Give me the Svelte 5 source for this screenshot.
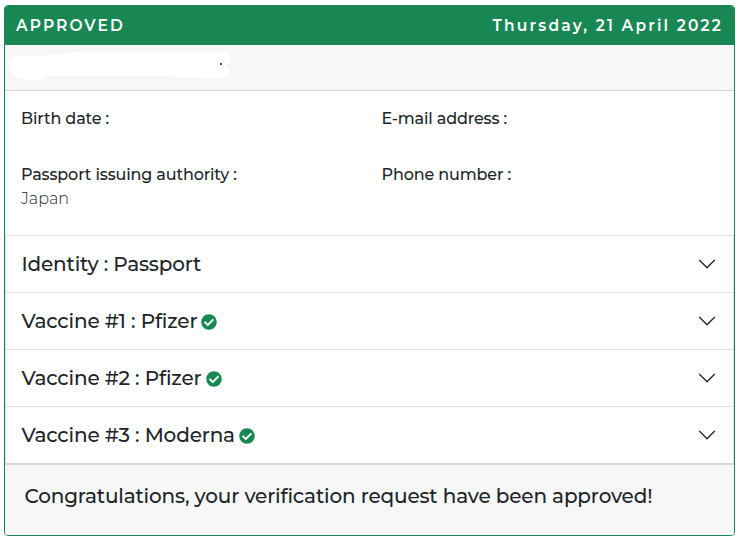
<script>
	let status = 'APPROVED';
	let date = 'Thursday, 21 April 2022';

	let details = [
		{ label: 'Birth date :', value: '' },
		{ label: 'E-mail address :', value: '' },
		{ label: 'Passport issuing authority :', value: 'Japan' },
		{ label: 'Phone number :', value: '' }
	];

	let sections = [
		{ title: 'Identity : Passport', verified: false },
		{ title: 'Vaccine #1 : Pfizer', verified: true },
		{ title: 'Vaccine #2 : Pfizer', verified: true },
		{ title: 'Vaccine #3 : Moderna', verified: true }
	];
</script>

<main class="card">
	<header>
		<span class="status">{status}</span>
		<span class="date">{date}</span>
	</header>

	<div class="name">
		<!-- the holder's name is painted over -->
		<svg width="224" height="34" viewBox="0 0 224 34">
			<path d="M8 5 L48 4 Q58 1 76 0.5 L214 0.5 Q222 2 222 7 Q222 12 216 14 Q220 16 220 21 Q219 27 211 27.5 L174 26 L155 25 L36 25 Q33 29 27 29.5 L10 28 Q3 27 3.5 21 Q0 18 0.5 12 Q2 5 8 5 Z" fill="#fff" />
			<rect x="211" y="12" width="2" height="2" fill="#444" />
		</svg>
	</div>

	<div class="details">
		{#each details as item}
			<div class="item">
				<div class="label">{item.label}</div>
				<div class="value">{item.value}</div>
			</div>
		{/each}
	</div>

	<div class="accordion">
		{#each sections as section}
			<button class="section">
				<span class="title">{section.title}</span>
				{#if section.verified}
					<svg class="check" viewBox="0 0 512 512">
						<path d="M504 256c0 136.967-111.033 248-248 248S8 392.967 8 256 119.033 8 256 8s248 111.033 248 248zM227.314 387.314l184-184c6.248-6.248 6.248-16.379 0-22.627l-22.627-22.627c-6.248-6.249-16.379-6.249-22.628 0L216 308.118l-70.059-70.059c-6.248-6.248-16.379-6.248-22.628 0l-22.627 22.627c-6.248 6.248-6.248 16.379 0 22.627l104 104c6.249 6.249 16.379 6.249 22.628.001z" fill="#198754" />
					</svg>
				{/if}
				<svg class="chevron" viewBox="0 0 16 16">
					<path fill-rule="evenodd" d="M1.646 4.646a.5.5 0 0 1 .708 0L8 10.293l5.646-5.647a.5.5 0 0 1 .708.708l-6 6a.5.5 0 0 1-.708 0l-6-6a.5.5 0 0 1 0-.708z" fill="#212529" />
				</svg>
			</button>
		{/each}
	</div>

	<footer>Congratulations, your verification request have been approved!</footer>
</main>

<style>
	:global(body) {
		background: #fff;
	}

	.card {
		box-sizing: border-box;
		width: 731px;
		height: 531px;
		margin: 5px 0 0 4px;
		border: 1px solid #198754;
		border-radius: 4px;
		overflow: hidden;
		display: flex;
		flex-direction: column;
		font-family: Montserrat, Inter, "Liberation Sans", sans-serif;
		color: #212529;
	}

	header {
		box-sizing: border-box;
		height: 39px;
		padding: 0 11px 1px;
		display: flex;
		justify-content: space-between;
		align-items: center;
		background: #198754;
		color: #fff;
		font-size: 15.5px;
		font-weight: 600;
		white-space: nowrap;
	}

	.status {
		letter-spacing: 2.1px;
	}

	.date {
		letter-spacing: 2.2px;
	}

	.name {
		box-sizing: border-box;
		height: 46px;
		padding: 6px 0 0 4px;
		background: #f7f7f7;
		border-bottom: 1px solid #d6d6d6;
	}

	.name svg {
		display: block;
		overflow: visible;
	}

	.details {
		box-sizing: border-box;
		height: 144px;
		padding: 16px;
		display: grid;
		grid-template-columns: 360.5px 1fr;
		grid-template-rows: 56px 56px;
		font-size: 16px;
		line-height: 24px;
		white-space: nowrap;
	}

	.label {
		font-weight: 500;
		letter-spacing: -0.14px;
	}

	.value {
		font-weight: 300;
	}

	.section {
		box-sizing: border-box;
		width: 100%;
		height: 57px;
		margin: 0;
		padding: 0 16px 0 15.5px;
		display: flex;
		align-items: center;
		background: #fff;
		border: 1px solid #dfdfdf;
		border-bottom: none;
		font: inherit;
		font-size: 20px;
		font-weight: 500;
		letter-spacing: -0.16px;
		color: inherit;
		white-space: nowrap;
	}

	.check {
		width: 16px;
		height: 16px;
		margin: 2px 0 0 4px;
	}

	.chevron {
		width: 20px;
		height: 20px;
		margin-left: auto;
	}

	footer {
		flex: 1;
		padding: 15px 19.5px;
		background: #f7f7f7;
		border-top: 2px solid #d9d9d9;
		font-size: 20px;
		line-height: 32px;
		font-weight: 500;
		letter-spacing: -0.16px;
		white-space: nowrap;
	}
</style>
